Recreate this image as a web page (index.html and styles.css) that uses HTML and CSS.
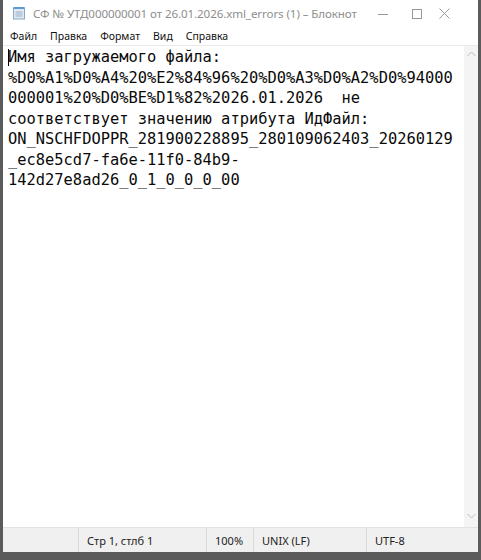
FILE: index.html
```html
<!DOCTYPE html>
<html lang="ru">
<head>
<meta charset="utf-8">
<title>Блокнот</title>
<link rel="stylesheet" href="styles.css">
</head>
<body>
<div class="window">
  <div class="titlebar">
    <svg class="app-icon" width="14" height="14" viewBox="0 0 14 14">
      <rect x="1.5" y="2" width="11" height="11" fill="#dfe9f3" stroke="#8aa6c1" stroke-width="1"/>
      <rect x="1.5" y="1" width="11" height="2" fill="#5c9ad2"/>
      <line x1="3.5" y1="6" x2="10.5" y2="6" stroke="#9bb1c7"/>
      <line x1="3.5" y1="8" x2="10.5" y2="8" stroke="#9bb1c7"/>
      <line x1="3.5" y1="10" x2="10.5" y2="10" stroke="#9bb1c7"/>
    </svg>
    <span class="title">СФ № УТД000000001 от 26.01.2026.xml_errors (1) – Блокнот</span>
    <div class="controls">
      <span class="ctl ctl-min">
        <svg width="10" height="10" viewBox="0 0 10 10"><line x1="0" y1="5.5" x2="10" y2="5.5" stroke="#999" stroke-width="1"/></svg>
      </span>
      <span class="ctl ctl-max">
        <svg width="10" height="10" viewBox="0 0 10 10"><rect x="0.5" y="0.5" width="9" height="9" fill="none" stroke="#999" stroke-width="1"/></svg>
      </span>
      <span class="ctl ctl-close">
        <svg width="11" height="11" viewBox="0 0 11 11"><path d="M0.5 0.5 L10.5 10.5 M10.5 0.5 L0.5 10.5" stroke="#999" stroke-width="1"/></svg>
      </span>
    </div>
  </div>
  <div class="menubar">
    <span class="menu">Файл</span>
    <span class="menu">Правка</span>
    <span class="menu">Формат</span>
    <span class="menu">Вид</span>
    <span class="menu">Справка</span>
  </div>
  <div class="editor">
    <div class="text"><span class="caret"></span>Имя загружаемого файла:
%D0%A1%D0%A4%20%E2%84%96%20%D0%A3%D0%A2%D0%94000
000001%20%D0%BE%D1%82%2026.01.2026  не
соответствует значению атрибута ИдФайл:
ON_NSCHFDOPPR_281900228895_280109062403_20260129
_ec8e5cd7-fa6e-11f0-84b9-
142d27e8ad26_0_1_0_0_0_00</div>
    <div class="scrollbar">
      <svg width="9" height="6" viewBox="0 0 9 6"><path d="M0.5 5 L4.5 1 L8.5 5" fill="none" stroke="#bbb" stroke-width="1"/></svg>
      <svg width="9" height="6" viewBox="0 0 9 6"><path d="M0.5 1 L4.5 5 L8.5 1" fill="none" stroke="#bbb" stroke-width="1"/></svg>
    </div>
  </div>
  <div class="statusbar">
    <span class="cell c0"></span>
    <span class="cell c1">Стр 1, стлб 1</span>
    <span class="cell c2">100%</span>
    <span class="cell c3">UNIX (LF)</span>
    <span class="cell c4">UTF-8</span>
  </div>
</div>
</body>
</html>
```
FILE: styles.css
```css
html, body {
  margin: 0;
  padding: 0;
}
body {
  background: #5b5b5b;
  width: 481px;
  height: 560px;
  overflow: hidden;
}
.window {
  margin-left: 3px;
  width: 475px;
  height: 552px;
  background: #ffffff;
  display: flex;
  flex-direction: column;
  font-family: "Noto Sans", "Open Sans", sans-serif;
}
.titlebar {
  height: 27px;
  display: flex;
  align-items: center;
  flex-shrink: 0;
}
.app-icon {
  margin-left: 9px;
  margin-right: 7px;
  margin-top: -1px;
}
.title {
  font-size: 11.6px;
  color: #8e8e8e;
  white-space: nowrap;
  letter-spacing: -0.1px;
}
.controls {
  margin-left: auto;
  display: flex;
  align-items: center;
  margin-right: 28px;
}
.ctl {
  display: flex;
  align-items: center;
}
.ctl-max { margin-left: 24px; }
.ctl-close { margin-left: 17px; }
.menubar {
  height: 18px;
  display: flex;
  align-items: center;
  padding-left: 7px;
  gap: 13px;
  font-size: 10.5px;
  color: #111;
  flex-shrink: 0;
}
.editor {
  flex: 1;
  display: flex;
  border-top: 1px solid #e9e9e9;
  min-height: 0;
}
.text {
  flex: 1;
  padding: 1px 0 0 5px;
  font-family: "DejaVu Sans Mono", "Liberation Mono", monospace;
  font-size: 15.4px;
  line-height: 20.5px;
  color: #0a0a0a;
  white-space: pre;
  position: relative;
}
.caret {
  position: absolute;
  left: 5px;
  top: 3px;
  width: 1px;
  height: 17px;
  background: #000;
}
.scrollbar {
  width: 14px;
  background: #f4f4f4;
  display: flex;
  flex-direction: column;
  justify-content: space-between;
  align-items: center;
  padding: 5px 0 8px;
}
.statusbar {
  height: 24px;
  flex-shrink: 0;
  background: #f0f0f0;
  border-top: 1px solid #e2e2e2;
  display: flex;
  align-items: center;
  font-size: 11px;
  color: #222;
}
.cell {
  height: 100%;
  display: flex;
  align-items: center;
  border-left: 1px solid #dadada;
  padding-left: 8px;
  box-sizing: border-box;
}
.c0 { width: 75px; border-left: none; }
.c1 { width: 128px; }
.c2 { width: 47px; }
.c3 { width: 113px; }
.c4 { flex: 1; }
```
